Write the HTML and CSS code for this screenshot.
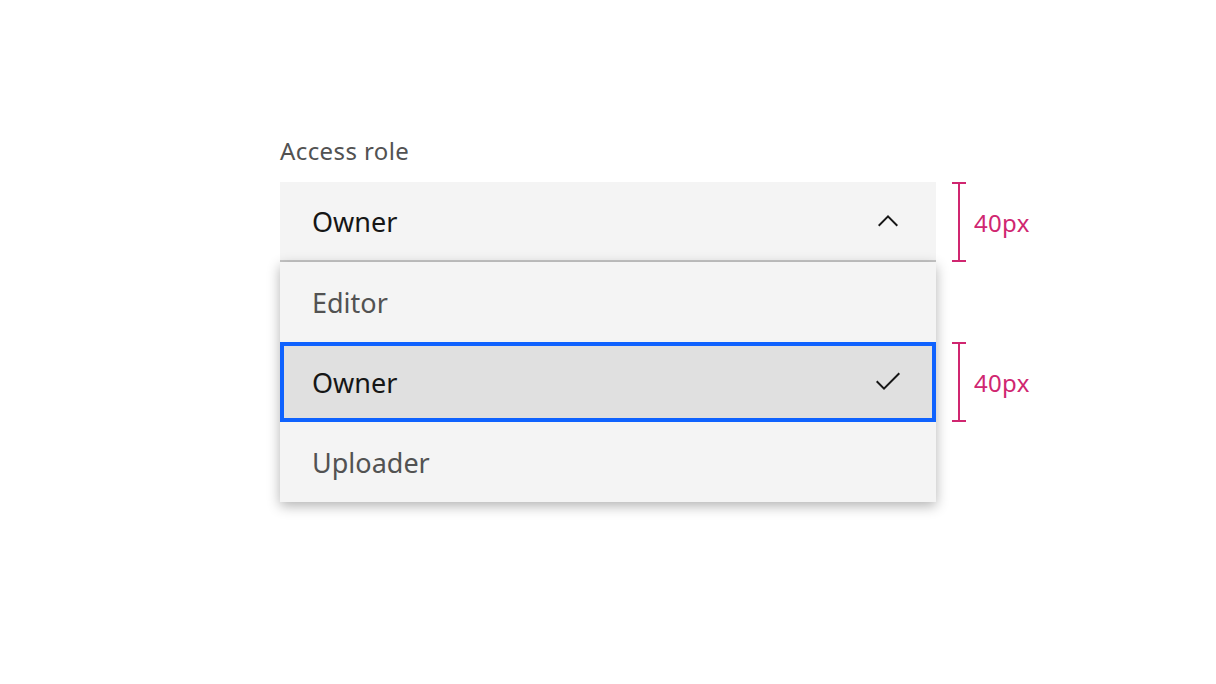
FILE: index.html
```html
<!DOCTYPE html>
<html lang="en">
  <head>
    <meta charset="UTF-8" />
    <meta name="viewport" content="width=device-width, initial-scale=1.0" />
    <title>Dropdown - Access role</title>
    <link rel="stylesheet" href="styles.css">
  </head>
  <body>
    <div class="stage">
      <label class="field-label">Access role</label>

      <div class="field">
        <span>Owner</span>
        <svg class="icon" viewBox="0 0 16 16" width="32" height="32">
          <path d="M8 5L13 10 12.3 10.7 8 6.4 3.7 10.7 3 10z" />
        </svg>
      </div>
      <div class="measure measure-field">
        <div class="bracket"></div>
        <span>40px</span>
      </div>

      <ul class="menu">
        <li class="menu-item">Editor</li>
        <li class="menu-item selected">
          <span>Owner</span>
          <svg class="icon" viewBox="0 0 16 16" width="32" height="32">
            <path d="M6 10.6L2.7 7.3 2 8 6 12 14 4 13.3 3.3z" />
          </svg>
        </li>
        <li class="menu-item">Uploader</li>
      </ul>
      <div class="measure measure-item">
        <div class="bracket"></div>
        <span>40px</span>
      </div>
    </div>
  </body>
</html>
```

FILE: styles.css
```css
:root {
  --field-bg: #f4f4f4;
  --text-primary: #161616;
  --text-secondary: #525252;
  --focus: #0f62fe;
  --annotation: #d02670;
}

body {
  margin: 0;
  background: #ffffff;
  font-family: "Noto Sans", "Open Sans", sans-serif;
  color: var(--text-primary);
}

.stage {
  display: grid;
  grid-template-columns: 656px auto;
  grid-template-rows: auto 80px 80px 80px 80px;
  column-gap: 16px;
  padding: 135px 0 80px 280px;
}

.field-label {
  grid-column: 1;
  grid-row: 1;
  font-size: 24px;
  line-height: 32px;
  letter-spacing: 0.4px;
  color: var(--text-secondary);
  margin-bottom: 15px;
}

.field {
  grid-column: 1;
  grid-row: 2;
  display: flex;
  align-items: center;
  justify-content: space-between;
  box-sizing: border-box;
  padding: 0 32px;
  background: var(--field-bg);
  border-bottom: 2px solid #c6c6c6;
  font-size: 27px;
}

.icon {
  fill: var(--text-primary);
  flex-shrink: 0;
}

.menu {
  grid-column: 1;
  grid-row: 3 / 6;
  list-style: none;
  margin: 0;
  padding: 0;
  background: var(--field-bg);
  box-shadow: 0 4px 12px rgba(0, 0, 0, 0.3);
  position: relative;
}

.menu-item {
  height: 80px;
  box-sizing: border-box;
  display: flex;
  align-items: center;
  justify-content: space-between;
  padding: 0 32px;
  font-size: 27px;
  color: var(--text-secondary);
}

.menu-item.selected {
  background: #e0e0e0;
  color: var(--text-primary);
  box-shadow: inset 0 0 0 4px var(--focus);
}

.measure {
  grid-column: 2;
  display: flex;
  align-items: center;
  gap: 8px;
  color: var(--annotation);
  font-size: 24px;
  letter-spacing: 0.3px;
}

.measure-field {
  grid-row: 2;
}

.measure-item {
  grid-row: 4;
}

.bracket {
  position: relative;
  width: 14px;
  height: 80px;
  box-sizing: border-box;
  border-top: 2px solid var(--annotation);
  border-bottom: 2px solid var(--annotation);
}

.bracket::before {
  content: "";
  position: absolute;
  left: 6px;
  top: 0;
  bottom: 0;
  width: 2px;
  background: var(--annotation);
}
```
